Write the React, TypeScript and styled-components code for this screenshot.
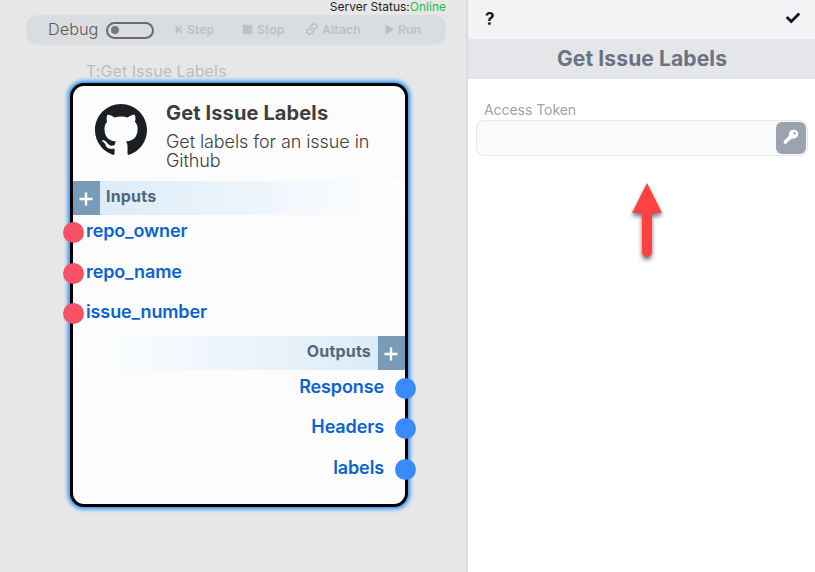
import React from "react";
import styled, { createGlobalStyle } from "styled-components";
import { FaCheck, FaLink, FaPlay, FaStepForward, FaStop } from "react-icons/fa";

const GlobalStyle = createGlobalStyle`
  * { box-sizing: border-box; }
  body { margin: 0; font-family: Inter, "Liberation Sans", sans-serif; overflow: hidden; }
`;

const Page = styled.div`
  display: flex;
  width: 815px;
  height: 572px;
`;

const Canvas = styled.main`
  width: 468px;
  height: 100%;
  background: #e7e7e7;
  border-right: 2px solid #dadde1;
`;

const Status = styled.div`
  height: 15px;
  width: 446px;
  text-align: right;
  font-size: 12px;
  line-height: 14px;
  color: #222;
  white-space: nowrap;
`;

const Online = styled.span`
  color: #1dbf45;
`;

const Toolbar = styled.div`
  display: flex;
  align-items: center;
  width: 420px;
  height: 30px;
  margin-left: 26px;
  padding-left: 22px;
  border-radius: 12px;
  background: #d9dde0;
`;

const DebugLabel = styled.span`
  width: 58px;
  padding-bottom: 2px;
  font-size: 16.3px;
  font-weight: 300;
  color: #5a5a5a;
`;

const Toggle = styled.span`
  display: flex;
  align-items: center;
  width: 48px;
  height: 17px;
  margin-right: 20px;
  padding-left: 3px;
  border: 2px solid #6b6969;
  border-radius: 9px;
`;

const Knob = styled.span`
  width: 8px;
  height: 8px;
  border-radius: 50%;
  background: #777;
`;

const Tool = styled.span<{ $width: number }>`
  display: flex;
  align-items: center;
  gap: 4px;
  width: ${(p) => p.$width}px;
  padding-bottom: 2px;
  font-size: 12.3px;
  font-weight: 600;
  color: #bfc0c1;
  white-space: nowrap;
`;

const TypeLabel = styled.div`
  margin: 16px 0 0 86px;
  height: 22px;
  font-size: 16px;
  line-height: 20px;
  letter-spacing: 0.06px;
  color: #bdbdbd;
`;

const Card = styled.section`
  width: 338px;
  height: 424px;
  margin: 0 0 0 70px;
  border: 3px solid #000;
  border-radius: 14px;
  background: #fcfcfc;
  box-shadow: 0 0 4px 1.5px #228cf5;
`;

const CardHeader = styled.header`
  display: flex;
  height: 95px;
  padding: 18px 0 0 22px;
  color: #1b1f23;
`;

const Heading = styled.div`
  margin: -3px 0 0 19px;
  color: #3e3e3e;
`;

const Title = styled.h2`
  margin: 0;
  font-size: 20px;
  line-height: 24px;
  font-weight: 700;
  letter-spacing: 0.13px;
`;

const Description = styled.p`
  width: 225px;
  margin: 7px 0 0;
  font-size: 18px;
  line-height: 19px;
  font-weight: 300;
  letter-spacing: -0.08px;
`;

const Section = styled.div<{ $out?: boolean }>`
  display: flex;
  flex-direction: ${(p) => (p.$out ? "row-reverse" : "row")};
  height: 34px;
  background: linear-gradient(${(p) => (p.$out ? "to left" : "to right")}, #d9eaf7, #fff);
`;

const Add = styled.span`
  display: flex;
  align-items: center;
  justify-content: center;
  width: 27px;
  height: 34px;
  padding: 1px 2px 0 0;
  color: #fff;
  background: #789bb7;
`;

const SectionName = styled.span`
  padding: 0 7px 0 6px;
  font-size: 16px;
  line-height: 31px;
  font-weight: 700;
  letter-spacing: 0.18px;
  color: #52677a;
`;

const Ports = styled.div<{ $height: number }>`
  height: ${(p) => p.$height}px;
`;

const Port = styled.div<{ $out?: boolean }>`
  display: flex;
  flex-direction: ${(p) => (p.$out ? "row-reverse" : "row")};
  align-items: flex-start;
  gap: ${(p) => (p.$out ? 11 : 2)}px;
  height: 40.5px;
  margin: 0 -11px 0 -10px;
  padding-top: ${(p) => (p.$out ? 6.6 : 6.2)}px;
`;

const PortDot = styled.span<{ $out?: boolean }>`
  width: 21px;
  height: 21px;
  margin-top: 1px;
  border-radius: 50%;
  background: ${(p) => (p.$out ? "#3b8afb" : "#f65164")};
`;

const PortName = styled.span`
  font-size: 18px;
  line-height: 20px;
  font-weight: 600;
  letter-spacing: -0.12px;
  color: #0b63d1;
`;

const Panel = styled.aside`
  width: 347px;
  height: 100%;
  background: #fff;
`;

const Actions = styled.div`
  display: flex;
  justify-content: space-between;
  height: 39px;
  padding: 11px 15px 0 17px;
  background: #f2f3f5;
  color: #111827;
`;

const Help = styled.span`
  font-size: 17px;
  line-height: 16px;
  font-weight: 700;
`;

const PanelTitle = styled.h1`
  margin: 0;
  height: 40px;
  padding-left: 1px;
  text-align: center;
  font-size: 21px;
  line-height: 40px;
  font-weight: 700;
  letter-spacing: 0.12px;
  color: #6b7280;
  background: #e5e6e9;
`;

const Label = styled.label`
  display: block;
  margin: 21px 0 0 16px;
  font-size: 14px;
  line-height: 20px;
  letter-spacing: -0.05px;
  color: #9ca3af;
`;

const Field = styled.div`
  display: flex;
  justify-content: flex-end;
  width: 332px;
  height: 36px;
  margin-left: 8px;
  padding: 1px;
  border: 1px solid #e5e7eb;
  border-radius: 8px;
  background: #f9fafb;
`;

const KeyButton = styled.button`
  display: flex;
  justify-content: center;
  width: 30px;
  height: 32px;
  padding: 7px 0 0;
  border: 0;
  border-radius: 6px;
  color: #fff;
  background: #9ca3af;
`;

const Arrow = styled.svg`
  display: block;
  margin: 21px 0 0 153px;
  filter: drop-shadow(0 3px 2px rgba(0, 0, 0, 0.55));
`;

const Plus = () => (
  <svg width="14" height="14" viewBox="0 0 14 14">
    <path d="M7 .5v13M.5 7h13" stroke="currentColor" strokeWidth="2.4" />
  </svg>
);

const GithubMark = () => (
  <svg width="52" height="52" viewBox="0 0 16 16" fill="currentColor">
    <path d="M8 0C3.58 0 0 3.58 0 8c0 3.54 2.29 6.53 5.47 7.59.4.07.55-.17.55-.38 0-.19-.01-.82-.01-1.49-2.01.37-2.53-.49-2.69-.94-.09-.23-.48-.94-.82-1.13-.28-.15-.68-.52-.01-.53.63-.01 1.08.58 1.23.82.72 1.21 1.87.87 2.33.66.07-.52.28-.87.51-1.07-1.78-.2-3.64-.89-3.64-3.95 0-.87.31-1.59.82-2.15-.08-.2-.36-1.02.08-2.12 0 0 .67-.21 2.2.82.64-.18 1.32-.27 2-.27s1.36.09 2 .27c1.53-1.04 2.2-.82 2.2-.82.44 1.1.16 1.92.08 2.12.51.56.82 1.27.82 2.15 0 3.07-1.87 3.75-3.65 3.95.29.25.54.73.54 1.48 0 1.07-.01 1.93-.01 2.2 0 .21.15.46.55.38A8.01 8.01 0 0 0 16 8c0-4.42-3.58-8-8-8z" />
  </svg>
);

const KeyIcon = () => (
  <svg width="16" height="16" viewBox="0 0 16 16">
    <path
      fill="currentColor"
      fillRule="evenodd"
      d="M6 4.6C6.4 2.3 8.3.8 10.6.8c2.6 0 4.7 1.9 4.7 4.3 0 2.6-2.2 4.6-4.8 4.6-.6 0-1 0-1.5-.2l-1 1-1.3.2-.3 1.3-1.5.3-.3 1.3-1.3 1.1H.8v-2.8l5.5-5.5A4 4 0 0 1 6 4.6ZM11.600 3a1.200 1.200 0 1 0 0 2.400 1.200 1.200 0 0 0 0-2.400Z"
    />
  </svg>
);

const inputs = ["repo_owner", "repo_name", "issue_number"];
const outputs = ["Response", "Headers", "labels"];

export default function App() {
  return (
    <Page>
      <GlobalStyle />
      <Canvas>
        <Status>Server Status:<Online>Online</Online></Status>
        <Toolbar>
          <DebugLabel>Debug</DebugLabel>
          <Toggle><Knob /></Toggle>
          <Tool $width={68}><FaStepForward size={9} />Step</Tool>
          <Tool $width={64}><FaStop size={11} />Stop</Tool>
          <Tool $width={79}><FaLink size={12} />Attach</Tool>
          <Tool $width={60}><FaPlay size={9} />Run</Tool>
        </Toolbar>
        <TypeLabel>T:Get Issue Labels</TypeLabel>
        <Card>
          <CardHeader>
            <GithubMark />
            <Heading>
              <Title>Get Issue Labels</Title>
              <Description>Get labels for an issue in Github</Description>
            </Heading>
          </CardHeader>
          <Section><Add><Plus /></Add><SectionName>Inputs</SectionName></Section>
          <Ports $height={121}>
            {inputs.map((name) => <Port key={name}><PortDot /><PortName>{name}</PortName></Port>)}
          </Ports>
          <Section $out><Add><Plus /></Add><SectionName>Outputs</SectionName></Section>
          <Ports $height={122}>
            {outputs.map((name) => <Port $out key={name}><PortDot $out /><PortName>{name}</PortName></Port>)}
          </Ports>
        </Card>
      </Canvas>
      <Panel>
        <Actions><Help>?</Help><FaCheck size={14} /></Actions>
        <PanelTitle>Get Issue Labels</PanelTitle>
        <Label>Access Token</Label>
        <Field><KeyButton aria-label="Key"><KeyIcon /></KeyButton></Field>
        <Arrow width="52" height="86" viewBox="0 0 52 86">
          <path d="M26 6 41 36H31V75a5 5 0 0 1-10 0V36H11Z" fill="#ff4141" />
        </Arrow>
      </Panel>
    </Page>
  );
}
